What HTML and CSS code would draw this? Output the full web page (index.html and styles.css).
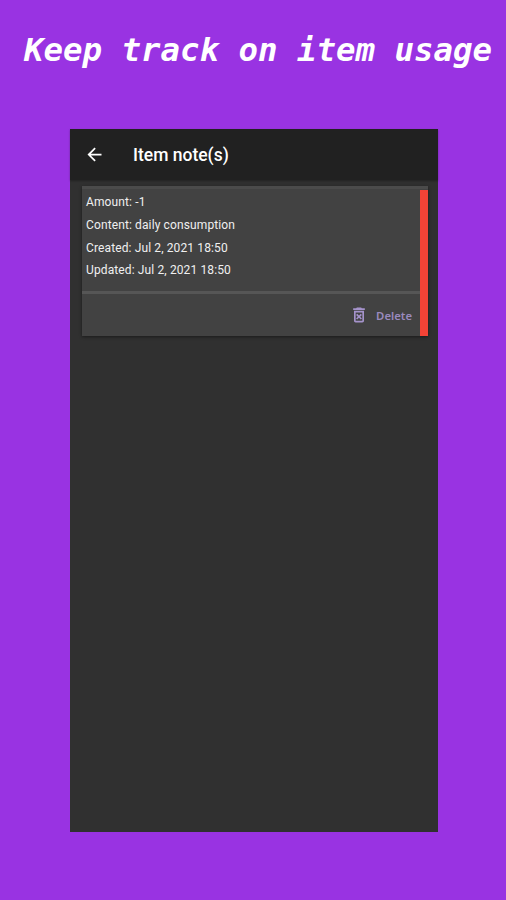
FILE: index.html
```
<!DOCTYPE html>
<html lang="en">

<head>
    <meta charset="UTF-8">
    <meta name="viewport" content="width=device-width, initial-scale=1.0">
    <title>Item notes</title>
    <link rel="stylesheet" href="styles.css">
</head>

<body>

    <h1 class="headline">Keep track on item usage</h1>

    <div class="phone">
        <div class="appBar">
            <svg class="backIcon" viewBox="0 0 24 24">
                <path d="M20 11H7.83l5.59-5.59L12 4l-8 8 8 8 1.41-1.41L7.83 13H20v-2z"/>
            </svg>
            <h2 class="appTitle">Item note(s)</h2>
        </div>

        <div class="noteCard">
            <div class="noteMain">
                <div class="noteText">
                    <p>Amount: -1</p>
                    <p>Content: daily consumption</p>
                    <p>Created: Jul 2, 2021 18:50</p>
                    <p>Updated: Jul 2, 2021 18:50</p>
                </div>
                <div class="noteActions">
                    <svg class="deleteIcon" viewBox="0 0 24 24">
                        <path d="M14.12 10.47L12 12.59l-2.13-2.12-1.41 1.41L10.59 14l-2.12 2.12 1.41 1.41L12 15.41l2.12 2.12 1.41-1.41L13.41 14l2.12-2.12zM15.5 4l-1-1h-5l-1 1H5v2h14V4zM6 19c0 1.1.9 2 2 2h8c1.1 0 2-.9 2-2V7H6v12zM8 9h8v10H8V9z"/>
                    </svg>
                    <span class="deleteLabel">Delete</span>
                </div>
            </div>
            <div class="noteStripe"></div>
        </div>
    </div>

</body>

</html>
```
FILE: styles.css
```
body {
    margin: 0;
    height: 900px;
    overflow: hidden;
    background-color: #9933e2;
    font-family: Roboto, sans-serif;
}

.headline {
    margin: 0;
    padding: 32px 0 0 24px;
    height: 98px;
    box-sizing: border-box;
    color: #fff;
    font-family: "DejaVu Sans Mono", monospace;
    font-size: 32.4px;
    font-style: italic;
    font-weight: bold;
    line-height: 37px;
    white-space: nowrap;
}

.phone {
    width: 368px;
    height: 703px;
    margin: 31px 0 0 70px;
    background-color: #303030;
}

.appBar {
    display: flex;
    align-items: center;
    height: 51px;
    background-color: #212121;
    box-shadow: 0 1px 2px rgba(0, 0, 0, 0.3);
}

.backIcon {
    width: 21px;
    height: 21px;
    margin-left: 14px;
    fill: #fff;
}

.appTitle {
    margin: 0 0 0 28px;
    color: #fff;
    font-size: 17.5px;
    font-weight: 500;
}

.noteCard {
    display: flex;
    width: 346px;
    height: 150px;
    box-sizing: border-box;
    margin: 6px 0 0 12px;
    border-top: 3px solid #4b4b4b;
    background-color: #424242;
    box-shadow: 0 1px 3px rgba(0, 0, 0, 0.45);
}

.noteMain {
    flex: 1;
}

.noteText {
    height: 102px;
    padding-left: 4px;
    border-bottom: 3px solid #565656;
    color: #f0f0f0;
    font-size: 12px;
    letter-spacing: 0.12px;
}

.noteText p {
    margin: 0;
    height: 22.8px;
    line-height: 26px;
}

.noteActions {
    display: flex;
    align-items: center;
    justify-content: flex-end;
    height: 42px;
    padding-right: 8px;
}

.deleteIcon {
    width: 20px;
    height: 20px;
    fill: #a593cb;
}

.deleteLabel {
    margin-left: 7px;
    color: #9a8abd;
    font-family: "Noto Sans", sans-serif;
    font-size: 11.3px;
    font-weight: 600;
}

.noteStripe {
    width: 8px;
    margin-top: 1px;
    background-color: #f44336;
}
```
